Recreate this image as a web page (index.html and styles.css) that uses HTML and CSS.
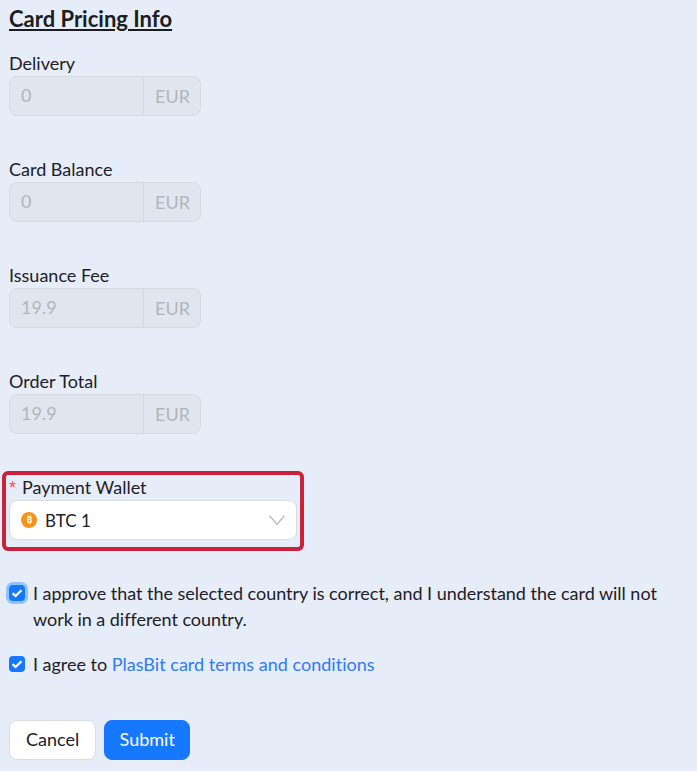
FILE: index.html
```html
<!DOCTYPE html>
<html lang="en">
<head>
<meta charset="utf-8">
<title>Card Pricing Info</title>
<link rel="stylesheet" href="styles.css">
</head>
<body>
<main class="page">
  <h2 class="title">Card Pricing Info</h2>
  <section class="fields">
    <div class="field">
      <div class="label">Delivery</div>
      <div class="group"><div class="value">0</div><div class="addon">EUR</div></div>
    </div>
    <div class="field">
      <div class="label">Card Balance</div>
      <div class="group"><div class="value">0</div><div class="addon">EUR</div></div>
    </div>
    <div class="field">
      <div class="label">Issuance Fee</div>
      <div class="group"><div class="value">19.9</div><div class="addon">EUR</div></div>
    </div>
    <div class="field">
      <div class="label">Order Total</div>
      <div class="group"><div class="value">19.9</div><div class="addon">EUR</div></div>
    </div>
  </section>
  <section class="wallet">
    <div class="highlight"></div>
    <div class="label"><span class="req">*</span>Payment Wallet</div>
    <div class="select">
      <svg class="coin" width="16" height="16" viewBox="0 0 16 16">
        <circle cx="8" cy="8" r="8" fill="#f7931a"/>
        <path d="M6.1 4.2h2.8c1.2 0 1.9.6 1.9 1.6 0 .7-.4 1.2-1 1.4.8.2 1.3.7 1.3 1.6 0 1.2-.9 1.9-2.2 1.9H6.1zM7.5 6.9h1.1c.5 0 .8-.2.8-.6s-.3-.6-.8-.6H7.5zM7.5 9.3h1.3c.6 0 .9-.2.9-.7s-.3-.7-.9-.7H7.5zM7.2 3.2h1v1.2h-1zM8.9 3.2h1v1.2h-1zM7.2 10.5h1v1.2h-1zM8.9 10.5h1v1.2h-1z" fill="#fff" fill-rule="evenodd"/>
      </svg>
      <span class="select-text">BTC 1</span>
      <svg class="chev" width="16" height="10" viewBox="0 0 16 10">
        <path d="M.6.6L8 9.4 15.4.6" fill="none" stroke="#b4b8bf" stroke-width="1.3"/>
      </svg>
    </div>
  </section>
  <section class="checks">
    <div class="check">
      <span class="box focus"><svg width="16" height="16" viewBox="0 0 16 16"><path d="M3.6 8.2l3 2.8L12.4 5.2" fill="none" stroke="#fff" stroke-width="2.3"/></svg></span>
      <p class="check-text">I approve that the selected country is correct, and I understand the card will not work in a different country.</p>
    </div>
    <div class="check">
      <span class="box"><svg width="16" height="16" viewBox="0 0 16 16"><path d="M3.6 8.2l3 2.8L12.4 5.2" fill="none" stroke="#fff" stroke-width="2.3"/></svg></span>
      <p class="check-text">I agree to <a class="link" href="#">PlasBit card terms and conditions</a></p>
    </div>
  </section>
  <div class="actions">
    <button class="btn" type="button">Cancel</button>
    <button class="btn primary" type="button">Submit</button>
  </div>
</main>
</body>
</html>
```
FILE: styles.css
```css
* { box-sizing: border-box; }
html, body { margin: 0; height: 100%; }
body {
  background: #e6edf8;
  color: #1d2026;
  font-family: "Lato", "Liberation Sans", sans-serif;
  font-size: 18px;
  overflow: hidden;
}
.page { padding: 6px 9px 0; }
.title {
  margin: 0 0 20px;
  font-size: 22px;
  line-height: 26px;
  font-weight: 700;
  text-decoration: underline;
  color: #1b1d22;
}
.fields { display: flex; flex-direction: column; gap: 42px; }
.label { height: 24px; line-height: 24px; margin-top: -1px; margin-bottom: 1px; }
.group {
  display: flex;
  width: 192px;
  height: 40px;
  background: #e0e6ef;
  border: 1px solid #d6dae0;
  border-radius: 8px;
  color: #b1b5bb;
}
.value { flex: 1; padding-left: 11px; line-height: 37px; }
.addon {
  width: 57px;
  border-left: 1px solid #d6dae0;
  padding-left: 11px;
  line-height: 39px;
}
.wallet { position: relative; margin-top: 42px; width: 288px; }
.highlight {
  position: absolute;
  left: -7px;
  top: -4px;
  width: 302px;
  height: 80px;
  border: 4px solid #c8233a;
  border-radius: 6px;
  pointer-events: none;
}
.req { color: #ff4d4f; margin-right: 6px; font-family: "Liberation Sans", sans-serif; }
.select {
  display: flex;
  align-items: center;
  height: 40px;
  background: #fff;
  border: 1px solid #d9dce1;
  border-radius: 8px;
  padding: 0 11px;
}
.select-text { margin-left: 8px; flex: 1; font-size: 17px; }
.checks { margin-top: 40px; display: flex; flex-direction: column; gap: 19px; }
.check { display: flex; align-items: flex-start; gap: 8px; }
.box {
  flex: none;
  width: 16px;
  height: 16px;
  margin-top: 5px;
  background: #1677ff;
  border-radius: 4px;
  display: flex;
}
.box.focus { box-shadow: 0 0 0 3px #8fc4fb; }
.check-text { margin: 0; line-height: 26px; letter-spacing: -0.025px; }
.link { color: #2f7bf5; text-decoration: none; letter-spacing: 0.03px; }
.actions { display: flex; gap: 8px; margin-top: 43px; }
.btn {
  height: 40px;
  padding: 0 16px 2px;
  font: inherit;
  color: #1d2026;
  background: #fff;
  border: 1px solid #d9dce1;
  border-radius: 8px;
}
.btn.primary {
  width: 86px;
  padding: 0 0 2px;
  background: #1677ff;
  border-color: #1677ff;
  color: #fff;
}
```
